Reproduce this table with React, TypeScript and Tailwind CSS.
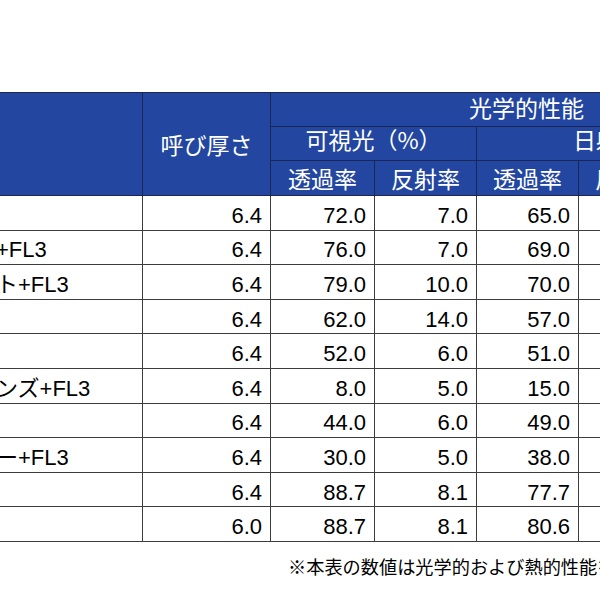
const ROWS = [
  { name: "フロートガラス", t: "6.4", vt: "72.0", vr: "7.0", st: "65.0", sr: "6.0", sa: "29.0" },
  { name: "熱線反射ブルー+FL3", t: "6.4", vt: "76.0", vr: "7.0", st: "69.0", sr: "6.0", sa: "25.0" },
  { name: "熱線反射ホワイト+FL3", t: "6.4", vt: "79.0", vr: "10.0", st: "70.0", sr: "9.0", sa: "21.0" },
  { name: "熱線反射ガラス", t: "6.4", vt: "62.0", vr: "14.0", st: "57.0", sr: "13.0", sa: "30.0" },
  { name: "熱線吸収グレー", t: "6.4", vt: "52.0", vr: "6.0", st: "51.0", sr: "5.0", sa: "44.0" },
  { name: "熱線反射型ブロンズ+FL3", t: "6.4", vt: "8.0", vr: "5.0", st: "15.0", sr: "5.0", sa: "80.0" },
  { name: "熱線吸収ブルー", t: "6.4", vt: "44.0", vr: "6.0", st: "49.0", sr: "5.0", sa: "46.0" },
  { name: "熱線反射シルバー+FL3", t: "6.4", vt: "30.0", vr: "5.0", st: "38.0", sr: "5.0", sa: "57.0" },
  { name: "高透過ガラス", t: "6.4", vt: "88.7", vr: "8.1", st: "77.7", sr: "7.1", sa: "15.2" },
  { name: "透明フロート", t: "6.0", vt: "88.7", vr: "8.1", st: "80.6", sr: "7.3", sa: "12.1" },
];

const th = "border border-[#1b2656] text-white font-normal text-center align-middle p-0 leading-[24px]";
const cell = "border border-[#3d3d3d] align-middle pt-[6px] pb-0 leading-[22px]";
const num = `${cell} text-right pr-2`;
const name = `${cell} text-left pl-2 whitespace-nowrap`;

export default function App() {
  return (
    <div className="w-[600px] h-[600px] overflow-hidden bg-white pt-[92px] font-['Liberation_Sans','Noto_Sans_CJK_JP',sans-serif] text-black">
      <table className="border-collapse table-fixed -ml-[167px] w-[949px]">
        <colgroup>
          <col className="w-[309px]" />
          <col className="w-[128px]" />
          <col className="w-[104px]" />
          <col className="w-[102px]" />
          <col className="w-[102px]" />
          <col className="w-[102px]" />
          <col className="w-[102px]" />
        </colgroup>
        <thead className="bg-[#2347a0] text-[23px] font-['Noto_Sans_CJK_JP',sans-serif]">
          <tr className="h-[34px]">
            <th rowSpan={3} className={th}></th>
            <th rowSpan={3} className={th}>呼び厚さ</th>
            <th colSpan={5} className={`${th} pb-[6px]`}>光学的性能</th>
          </tr>
          <tr className="h-[34px]">
            <th colSpan={2} className={`${th} pb-[9px]`}>可視光（%）</th>
            <th colSpan={3} className={`${th} pb-[9px]`}>日射（%）</th>
          </tr>
          <tr className="h-[35px]">
            <th className={th}>透過率</th>
            <th className={th}>反射率</th>
            <th className={th}>透過率</th>
            <th className={th}>反射率</th>
            <th className={th}>吸収率</th>
          </tr>
        </thead>
        <tbody className="text-[22px]">
          {ROWS.map((r) => (
            <tr key={r.name} className="h-[34.6px]">
              <td className={name}>{r.name}</td>
              <td className={num}>{r.t}</td>
              <td className={num}>{r.vt}</td>
              <td className={num}>{r.vr}</td>
              <td className={num}>{r.st}</td>
              <td className={num}>{r.sr}</td>
              <td className={num}>{r.sa}</td>
            </tr>
          ))}
        </tbody>
      </table>
      <p className="mt-3 ml-[288px] whitespace-nowrap text-[18.2px] leading-[24px] font-['Noto_Sans_CJK_JP',sans-serif]">
        ※本表の数値は光学的および熱的性能を示す参考値であり、保証値ではありません。
      </p>
    </div>
  );
}
